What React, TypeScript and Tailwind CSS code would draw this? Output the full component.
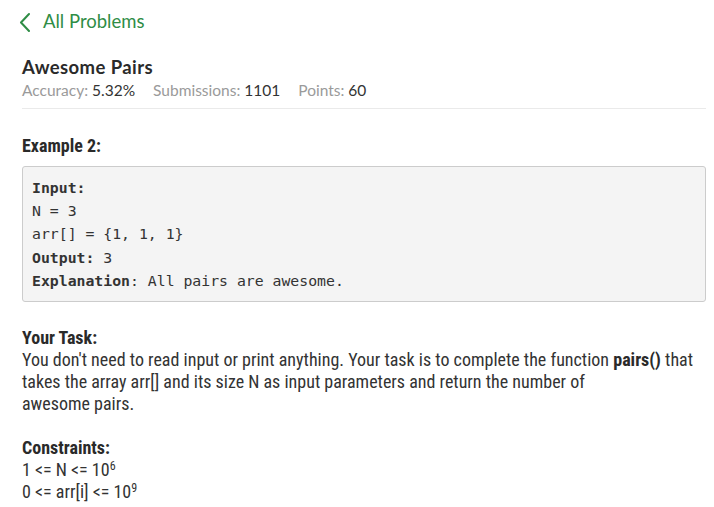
import React from 'react';

const body = { fontFamily: "'Roboto Condensed', Roboto, sans-serif" };
const heading = { fontFamily: "Lato, 'Open Sans', sans-serif" };
const mono = { fontFamily: "'DejaVu Sans Mono', 'Liberation Mono', monospace" };

const BackIcon = () => (
  <svg width="12" height="20" viewBox="0 0 12 20" fill="none" className="text-[#2f8d46]">
    <polyline points="10,2 2,10.5 10,19" stroke="currentColor" strokeWidth="2" strokeLinecap="round" strokeLinejoin="round" />
  </svg>
);

export default function App() {
  return (
    <div className="min-h-[507px] bg-white pl-[22px] pr-[8px] text-[#333]">
      <div className="flex h-[42px] items-center pt-[1px]" style={heading}>
        <span className="ml-[-3px]"><BackIcon /></span>
        <span className="ml-[12px] text-[18.5px] text-[#2f8d46]">All Problems</span>
      </div>

      <div className="border-b border-[#eaeaea] pb-[7px] pt-[13px]" style={heading}>
        <h1 className="text-[18.5px] font-bold leading-[24px] tracking-[0.4px] text-[#2a2a2a]">Awesome Pairs</h1>
        <div className="flex gap-[18px] text-[15.5px] leading-[22px]">
          <span><span className="text-[#9a9a9a]">Accuracy: </span><span className="text-[#333]">5.32%</span></span>
          <span><span className="text-[#9a9a9a]">Submissions: </span><span className="text-[#333]">1101</span></span>
          <span><span className="text-[#9a9a9a]">Points: </span><span className="text-[#333]">60</span></span>
        </div>
      </div>

      <div style={body}>
        <h2 className="mt-[25px] text-[18px] font-bold leading-[24px] text-[#2a2a2a]">Example 2:</h2>

        <pre
          className="mt-[8px] rounded-[3px] border border-[#cccccc] bg-[#f4f4f4] px-[9px] py-[9px] text-[14.8px] leading-[23.2px] text-[#333]"
          style={mono}
        >
          <b>Input:</b>{'\n'}
          N = 3{'\n'}
          arr[] = {'{1, 1, 1}'}{'\n'}
          <b>Output:</b> 3{'\n'}
          <b>Explanation</b>: All pairs are awesome.
        </pre>

        <div className="mt-[25px] text-[18px] leading-[22px] text-[#333]">
          <p className="font-bold text-[#2a2a2a]">Your Task:</p>
          <p>
            You don't need to read input or print anything. Your task is to complete the function{' '}
            <b className="text-[#2a2a2a]">pairs()</b> that takes the array arr[] and its size N as input parameters and return the number of
            <br />
            awesome pairs.
          </p>

          <p className="mt-[22px] font-bold text-[#2a2a2a]">Constraints:</p>
          <p>
            1 &lt;= N &lt;= 10<sup className="text-[12px]">6</sup>
            <br />
            0 &lt;= arr[i] &lt;= 10<sup className="text-[12px]">9</sup>
          </p>
        </div>
      </div>
    </div>
  );
}
